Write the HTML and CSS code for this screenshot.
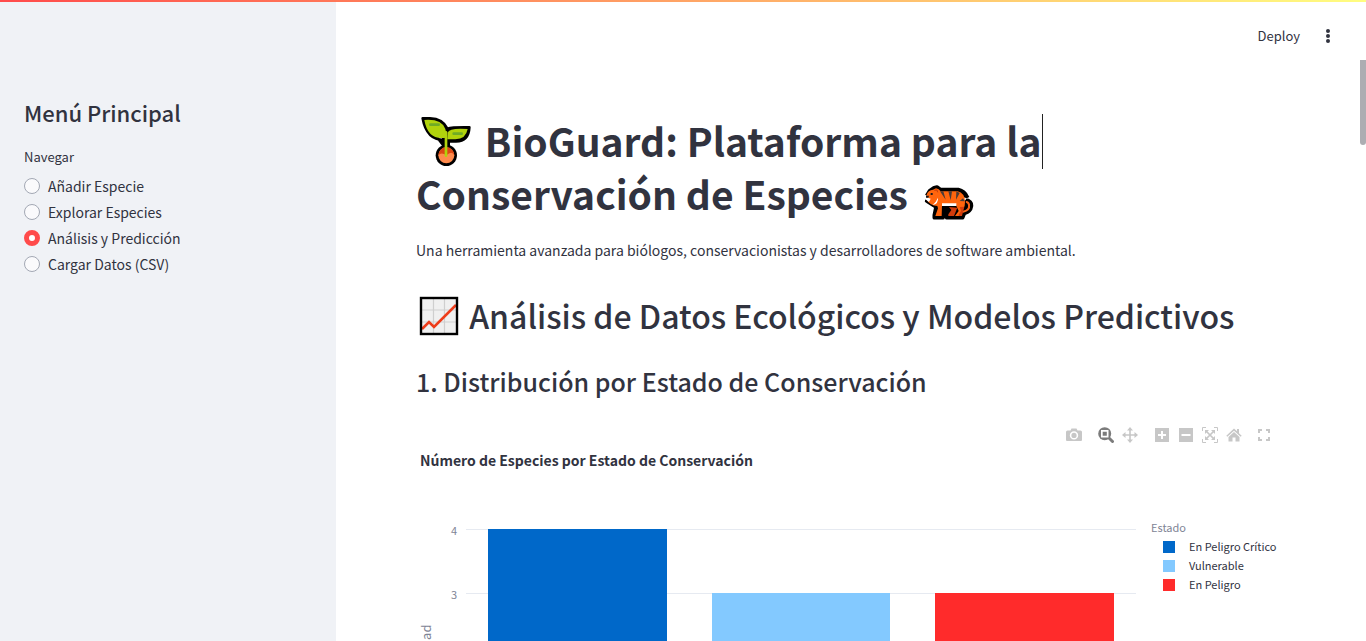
FILE: index.html
```html
<!DOCTYPE html>
<html lang="es">
<head>
<meta charset="utf-8">
<meta name="viewport" content="width=device-width, initial-scale=1">
<title>BioGuard</title>
<link rel="stylesheet" href="styles.css">
</head>
<body>
<div class="app">
  <div class="decoration"></div>
  <aside class="sidebar">
    <h2 class="sidebar-title">Menú Principal</h2>
    <fieldset class="nav">
      <legend class="nav-label">Navegar</legend>
      <div class="nav-options">
        <label class="option"><input class="radio" type="radio" name="nav"><span>Añadir Especie</span></label>
        <label class="option"><input class="radio" type="radio" name="nav"><span>Explorar Especies</span></label>
        <label class="option"><input class="radio" type="radio" name="nav" checked><span>Análisis y Predicción</span></label>
        <label class="option"><input class="radio" type="radio" name="nav"><span>Cargar Datos (CSV)</span></label>
      </div>
    </fieldset>
  </aside>
  <div class="main">
    <header class="header">
      <button class="deploy" type="button">Deploy</button>
      <button class="menu" type="button" aria-label="Menú">
        <svg width="20" height="20" viewBox="0 0 20 20" fill="#31333f"><circle cx="10" cy="5" r="2"/><circle cx="10" cy="10" r="2"/><circle cx="10" cy="15" r="2"/></svg>
      </button>
    </header>
    <main class="content">
      <h1 class="title"><svg class="emoji-large" viewBox="18 33 180 156" aria-label="Planta">
          <path d="M38 40H60Q98 41 112 71Q128 66 178 67Q176 108 138 109H113M103 125V105Q50 106 38 40Z" fill="#000" stroke="#000" stroke-width="8" stroke-linejoin="round"/>
          <path d="M108 71V130" stroke="#000" stroke-width="24"/>
          <circle cx="109" cy="151" r="32" fill="#000"/>
          <path d="M43 45Q95 41 106 72Q110 82 109 98Q54 108 43 45Z" fill="#b1d30d"/>
          <path d="M173 72Q117 68 113 83L112 103H136Q168 102 173 72Z" fill="#b1d30d"/>
          <circle cx="109" cy="151" r="24" fill="#ff8a4c"/>
          <path d="M85 151A24 24 0 0 1 133 151Q126 136 109 151Q94 140 85 151Z" fill="#dc4814"/>
          <path d="M61 59H86M131 86H155" stroke="#70ac26" stroke-width="8" stroke-linecap="round"/>
          <path d="M108 82V152" fill="none" stroke="#b1d30d" stroke-width="8" stroke-linecap="round"/>
        </svg> BioGuard: Plataforma para la<span class="caret"></span> Conservación de Especies <svg class="emoji-large" viewBox="28 -20 180 156" aria-label="Tigre">
          <path d="M57 60L66 45L79 36L88 34L99 42L152 42Q171 46 180 66M175 80Q190 91 180 106L170 113L165 126H117L114 109L106 110V126H80V118L85 94L57 76Z" fill="#000" stroke="#000" stroke-width="11" stroke-linejoin="round"/>
          <path d="M180 76Q194 83 187 99Q181 109 168 110" fill="none" stroke="#000" stroke-width="15" stroke-linecap="round"/>
          <path d="M166 108Q187 104 184 88Q183 80 177 79" fill="none" stroke="#f96318" stroke-width="6" stroke-linecap="round"/>
          <path d="M57 57Q61 44 76 42L85 38L93 41L99 47H150Q171 52 172 78Q173 91 166 100L154 121H142L153 106L145 89H103L102 121H83L91 98L89 91Q66 90 56 71Z" fill="#ff650d"/>
          <path d="M124 94L131 103L122 116V121H139L149 96ZM156 94L160 106L153 117V121H163L170 93Z" fill="#d23c0c"/>
          <path d="M97 47H107L114 72ZM122 47H133L129 74ZM146 47L156 52L145 72ZM166 68L171 77L156 76Z" fill="#493c37"/>
          <path d="M103 83H146V91H103ZM55 64L69 69L64 79L55 72ZM91 66Q93 84 75 88Q86 78 91 66Z" fill="#fff"/>
          <path d="M55 60H64L62 66H55ZM69 52H75V58H69Z" fill="#19191c"/>
          <path d="M80 44L88 43L90 50" fill="none" stroke="#c63c0c" stroke-width="3"/>
        </svg></h1>
      <p class="lead">Una herramienta avanzada para biólogos, conservacionistas y desarrolladores de software ambiental.</p>
      <h2 class="section"><svg class="emoji-medium" viewBox="0 0 46 40" aria-label="Gráfico">
          <rect x="5" y="2" width="36" height="36" fill="#f0f0f0"/>
          <path d="M17.500 3V37M28.500 3V37M6 14H40M6 26H40" stroke="#cfcfcf" stroke-width="1.200"/>
          <path d="M6 33L13 26L18 31L40 9" fill="none" stroke="#ee3d1b" stroke-width="2.600"/>
          <rect x="5" y="2" width="36" height="36" fill="none" stroke="#000" stroke-width="2.400"/>
        </svg> Análisis de Datos Ecológicos y Modelos Predictivos</h2>
      <h3 class="subsection">1. Distribución por Estado de Conservación</h3>
      <section class="figure">
        <div class="modebar">
          <div class="modegroup">
            <button class="tool" type="button" aria-label="Descargar"><svg viewBox="0 0 16 16"><path fill="currentColor" fill-rule="evenodd" d="M1.500 3.500H4.500L5.500 1.500H10.500L11.500 3.500H14.500Q16 3.500 16 5V13Q16 14 15 14H1Q0 14 0 13V5Q0 3.500 1.500 3.500ZM8 4.200A4.200 4.200 0 1 0 8 12.600A4.200 4.200 0 1 0 8 4.200ZM8 5.800A2.600 2.600 0 1 1 8 11A2.600 2.600 0 1 1 8 5.800Z"/></svg></button>
          </div>
          <div class="modegroup">
            <button class="tool active" type="button" aria-label="Zoom"><svg viewBox="0 0 16 16"><path d="M10.500 10.500L14.500 14.500" stroke="currentColor" stroke-width="3" stroke-linecap="round"/><circle cx="6.700" cy="6.700" r="6.500" fill="currentColor"/><path fill="#fff" fill-rule="evenodd" d="M3 3H10.500V10.500H3ZM4.700 4.700V8.800H8.800V4.700Z"/></svg></button>
            <button class="tool" type="button" aria-label="Mover"><svg viewBox="0 0 16 16" fill="currentColor"><path d="M8 0L11 3.500H8.800V7.200H12.500V5L16 8L12.500 11V8.800H8.800V12.500H11L8 16L5 12.500H7.200V8.800H3.500V11L0 8L3.500 5V7.200H7.200V3.500H5Z"/></svg></button>
          </div>
          <div class="modegroup">
            <button class="tool" type="button" aria-label="Acercar"><svg viewBox="0 0 16 16"><path fill="currentColor" fill-rule="evenodd" d="M1 1H15V15H1ZM7 4V7H4V9H7V12H9V9H12V7H9V4Z"/></svg></button>
            <button class="tool" type="button" aria-label="Alejar"><svg viewBox="0 0 16 16"><path fill="currentColor" fill-rule="evenodd" d="M1 1H15V15H1ZM3.500 7V9H12.500V7Z"/></svg></button>
            <button class="tool" type="button" aria-label="Autoescala"><svg viewBox="0 0 16 16" fill="none" stroke="currentColor"><path d="M.5 4V.5H4M12 .5H15.500V4M15.500 12V15.500H12M4 15.500H.5V12"/><path d="M4 4L12 12M12 4L4 12" stroke-width="1.700"/><path fill="currentColor" stroke="none" d="M3 3H7L3 7ZM13 3V7L9 3ZM3 13V9L7 13ZM13 13H9L13 9Z"/></svg></button>
            <button class="tool" type="button" aria-label="Restablecer"><svg viewBox="0 0 16 16" fill="currentColor"><path d="M8 1.500L11 4.300V2H13V6.200L15.700 8.700L14.700 9.800L8 3.800L1.300 9.800L.3 8.700ZM8 5L13.500 10V14.500H9.500V10.500H6.500V14.500H2.500V10Z"/></svg></button>
          </div>
          <button class="expand" type="button" aria-label="Pantalla completa"><svg viewBox="0 0 12 12" fill="none" stroke="currentColor" stroke-width="2"><path d="M1 4V1H4M8 1H11V4M11 8V11H8M4 11H1V8"/></svg></button>
        </div>
        <h4 class="chart-title">Número de Especies por Estado de Conservación</h4>
        <div class="chart">
          <div class="axis-title">Cantidad</div>
          <div class="ticks"><span>4</span><span>3</span></div>
          <div class="plot">
            <div class="bar critical" style="height:100%"></div>
            <div class="bar vulnerable" style="height:75%"></div>
            <div class="bar danger" style="height:75%"></div>
          </div>
          <div class="legend">
            <div class="legend-title">Estado</div>
            <ul class="legend-list">
              <li class="legend-item"><span class="swatch critical"></span>En Peligro Crítico</li>
              <li class="legend-item"><span class="swatch vulnerable"></span>Vulnerable</li>
              <li class="legend-item"><span class="swatch danger"></span>En Peligro</li>
            </ul>
          </div>
        </div>
      </section>
    </main>
  </div>
  <div class="scroll-thumb"></div>
</div>
</body>
</html>
```
FILE: styles.css
```css
* { box-sizing: border-box; }
body {
  margin: 0;
  font-family: "Noto Sans CJK SC", "Noto Sans", sans-serif;
  font-size: 14px;
  line-height: 24px;
  color: #31333f;
  background: #fff;
}
h1, h2, h3, h4, p, ul { margin: 0; padding: 0; }
button { border: 0; padding: 0; background: none; font: inherit; color: inherit; }
.app { position: relative; display: flex; height: 100vh; overflow: hidden; }
.decoration {
  position: absolute;
  top: 0;
  left: 0;
  right: 0;
  height: 2px;
  background: linear-gradient(90deg, #ff4b4b, #fffd80);
}
.sidebar { flex: 0 0 336px; padding: 94px 24px; background: #f0f2f6; }
.sidebar-title { font-size: 22px; line-height: 36px; font-weight: 500; }
.nav { margin: 0; padding: 0; border: 0; }
.nav-label { padding: 17px 0 7px; font-size: 13px; line-height: 20px; }
.nav-options { display: flex; flex-direction: column; gap: 2px; }
.option { display: flex; align-items: center; gap: 8px; }
.radio {
  appearance: none;
  width: 16px;
  height: 16px;
  margin: 0;
  border: 1px solid #a3a8b4;
  border-radius: 50%;
  background: #fafafc;
}
.radio:checked { border: 5px solid #ff4b4b; background: #fff; }
.main { flex: 1; min-width: 0; }
.header {
  display: flex;
  justify-content: flex-end;
  align-items: center;
  gap: 18px;
  height: 72px;
  padding-right: 28px;
}
.deploy { font-size: 13px; }
.menu { display: flex; }
.content { padding: 42px 86px 0 80px; }
.title { font-size: 39px; line-height: 53px; font-weight: 700; }
.emoji-large { width: 60px; height: 52px; margin: -8px 0; vertical-align: -3px; }
.emoji-medium { width: 46px; height: 40px; margin: -4px 0; vertical-align: -3px; }
.caret { display: inline-block; width: 1px; height: 55px; margin: -10px -1px -10px 0; vertical-align: -2px; background: #222; }
.lead { padding-top: 18px; }
.section { padding-top: 31px; font-size: 32px; line-height: 44px; font-weight: 500; }
.subsection { padding-top: 27px; font-size: 25px; line-height: 34px; font-weight: 500; }
.figure { padding-top: 29px; }
.modebar { display: flex; justify-content: flex-end; gap: 16px; padding-right: 10px; color: #c7c7c7; }
.modegroup { display: flex; gap: 8px; }
.tool { width: 16px; height: 16px; }
.tool svg { display: block; width: 16px; height: 16px; }
.expand svg { display: block; width: 12px; height: 12px; }
.active { color: #7c7c7c; }
.chart-title { padding: 5px 4px 0; font-size: 14px; font-weight: 700; }
.chart { display: flex; padding-top: 57px; }
.axis-title {
  width: 20px;
  padding-bottom: 96px;
  writing-mode: vertical-rl;
  transform: rotate(180deg);
  text-align: right;
  font-size: 13px;
  line-height: 20px;
  color: #808495;
}
.ticks { display: grid; grid-template-rows: repeat(4, 64px); width: 30px; padding-right: 9px; text-align: right; font-size: 11px; line-height: 2px; color: #808495; }
.plot {
  flex: 1;
  display: flex;
  justify-content: space-around;
  align-items: flex-end;
  height: 256px;
  background: repeating-linear-gradient(#e6eaf1 0 1px, transparent 1px 64px);
}
.bar { width: 26.7%; }
.critical { background: #0068c9; }
.vulnerable { background: #83c9ff; }
.danger { background: #ff2b2b; }
.legend { flex: 0 0 144px; margin-top: -11px; padding-left: 15px; font-size: 11px; line-height: 19px; }
.legend-title { color: #808495; }
.legend-list { list-style: none; padding-left: 12px; }
.legend-item { display: flex; align-items: center; gap: 14px; white-space: nowrap; }
.swatch { width: 12px; height: 12px; }
.scroll-thumb { position: absolute; top: 60px; right: 0; width: 6px; height: 85px; border-radius: 0 0 3px 3px; background: #adadb2; }
```
